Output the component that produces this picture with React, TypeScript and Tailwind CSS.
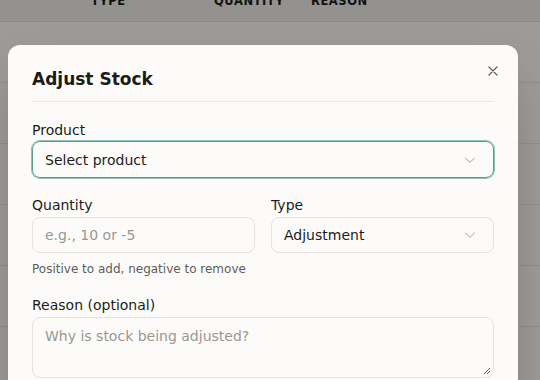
import React from "react";

function Chevron() {
  return (
    <svg width="18" height="18" viewBox="0 0 24 24" fill="none" stroke="#a19e9a" strokeWidth="1.3" strokeLinecap="round" strokeLinejoin="round">
      <path d="M6 9.5l6 5.5 6-5.5" />
    </svg>
  );
}

export default function App() {
  const rows = [0, 1, 2, 3, 4, 5];
  return (
    <div className="relative w-[540px] h-[380px] overflow-hidden bg-[#f7f6f3]" style={{ fontFamily: '"DejaVu Sans", sans-serif' }}>
      {/* background table */}
      <div className="absolute inset-0">
        <div className="h-[22px] bg-[#e9e7e3] border-b border-[#dcdad5] text-[11.5px] font-bold tracking-wider text-[#1c1b19] leading-none overflow-hidden">
          <div className="flex -mt-[4px]">
            <span className="ml-[91px] w-[123px]">TYPE</span>
            <span className="w-[97px]">QUANTITY</span>
            <span>REASON</span>
          </div>
        </div>
        {rows.map((r) => (
          <div key={r} className="h-[61px] border-b border-[#e4e2de]" />
        ))}
      </div>
      <div className="absolute inset-0 bg-black/[0.37]" />

      {/* modal */}
      <div className="absolute left-[8px] top-[45px] w-[510px] h-[400px] rounded-xl bg-[#fcfbfa] shadow-2xl px-6 pt-5">
        <button className="absolute right-[18px] top-[19px] text-[#555350]">
          <svg width="14" height="14" viewBox="0 0 24 24" fill="none" stroke="currentColor" strokeWidth="2.2" strokeLinecap="round">
            <path d="M5 5l14 14M19 5L5 19" />
          </svg>
        </button>
        <div className="border-b border-[#ece9e5] pb-2">
          <h2 className="text-[17px] leading-7 font-bold text-[#1c1b19]">Adjust Stock</h2>
        </div>

        <div className="mt-[18px] flex flex-col">
          <label className="text-sm leading-5 text-[#1c1b19] mb-[1px]">Product</label>
          <div className="h-[37px] rounded-lg border border-[#5a9e8a] ring-1 ring-[#8cc3b3] flex items-center justify-between pl-3 pr-[14px] text-sm text-[#1c1b19]">
            <span>Select product</span>
            <Chevron />
          </div>
        </div>

        <div className="mt-[17px] grid grid-cols-2 gap-4">
          <div className="flex flex-col">
            <label className="text-sm leading-5 text-[#1c1b19] mb-[2px]">Quantity</label>
            <div className="h-9 rounded-lg border border-[#e6e3df] flex items-center px-3 text-sm text-[#9a9793]">e.g., 10 or -5</div>
            <p className="mt-2 text-xs leading-4 text-[#5f5c58]">Positive to add, negative to remove</p>
          </div>
          <div className="flex flex-col">
            <label className="text-sm leading-5 text-[#1c1b19] mb-[2px]">Type</label>
            <div className="h-9 rounded-lg border border-[#e6e3df] flex items-center justify-between pl-3 pr-[14px] text-sm text-[#1c1b19]">
              <span>Adjustment</span>
              <Chevron />
            </div>
          </div>
        </div>

        <div className="mt-[18px] flex flex-col">
          <label className="text-sm leading-5 text-[#1c1b19] mb-[2px]">Reason (optional)</label>
          <div className="relative h-[61px] rounded-lg border border-[#e6e3df] px-3 pt-2 text-sm text-[#9a9793]">
            Why is stock being adjusted?
            <svg className="absolute right-[2px] bottom-[2px]" width="8" height="8" viewBox="0 0 8 8" stroke="#555" strokeWidth="1">
              <path d="M7 1L1 7M7 4L4 7" />
            </svg>
          </div>
        </div>
      </div>
    </div>
  );
}
